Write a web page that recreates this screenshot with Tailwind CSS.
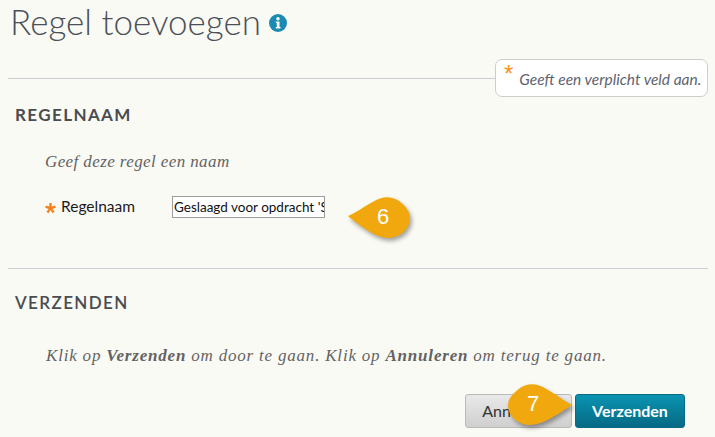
<!DOCTYPE html>
<html lang="en">
<head>
<meta charset="UTF-8">
<title>Regel toevoegen</title>
<script src="https://cdn.jsdelivr.net/npm/@tailwindcss/browser@4"></script>
</head>
<body class="bg-[#fafaf5] w-[715px] h-[437px] overflow-hidden relative font-['Lato',sans-serif]">
  <!-- Title -->
  <div class="flex items-start h-[59px] pl-[10px]">
    <h1 class="text-[35px] leading-[42px] font-light text-[#4a5058]">Regel toevoegen</h1>
    <svg class="ml-[8px] mt-[14px]" width="18" height="18" viewBox="0 0 18 18">
      <circle cx="9" cy="9" r="9" fill="#1c8bb3"/>
      <circle cx="9" cy="4.8" r="1.7" fill="#fff"/>
      <path d="M6.8 7.4h3.7v5.6h1v1.6H6.8V13h1v-4H6.8z" fill="#fff"/>
    </svg>
  </div>

  <!-- Required legend -->
  <div class="flex items-center pl-[8px] pr-[7px] h-[38px]">
    <div class="flex-1 h-px bg-[#c8ced4]"></div>
    <div class="w-[213px] h-[38px] bg-white border border-[#cdcdcd] rounded-[7px] flex pl-[8px]">
      <span class="text-[#f7931e] text-[24px] leading-[26px] mt-[1px] font-['Liberation_Sans',sans-serif]">*</span>
      <span class="italic text-[15.5px] leading-[18px] text-[#5f6470] ml-[6px] mt-[10px] whitespace-nowrap">Geeft een verplicht veld aan.</span>
    </div>
  </div>

  <!-- Regelnaam -->
  <section class="pl-[15px] pt-[8px]">
    <h2 class="text-[17px] leading-[20px] font-bold tracking-[1.4px] text-[#494c50]">REGELNAAM</h2>
    <p class="mt-[27px] ml-[30px] italic text-[17px] tracking-[0.4px] leading-[20px] text-[#636363] font-['Liberation_Serif',serif]">Geef deze regel een naam</p>
    <div class="flex items-center mt-[22px] ml-[30px]">
      <svg width="11" height="11" viewBox="0 0 11 11" class="mt-[5px]"><path d="M4.3 0h2.4v3.6l3.4-1.1.8 2.3-3.4 1.1 2.1 2.9-1.9 1.4-2.2-2.9-2.1 2.9-1.9-1.4 2.1-2.9L.2 4.8 1 2.5l3.3 1.1z" fill="#f5821f"/></svg>
      <label class="ml-[5px] text-[15.5px] leading-[20px] text-[#1a1a1a] w-[111px] -mt-[1px]">Regelnaam</label>
      <input class="w-[153px] h-[22px] bg-white border border-[#9e9e9e] pl-[1px] pr-0 text-[13.5px] text-[#111] font-['Lato',sans-serif] mt-[2px] outline-none" value="Geslaagd voor opdracht 'Schrijven'">
    </div>
  </section>

  <div class="ml-[8px] mr-[7px] mt-[50px] h-px bg-[#c8ced4]"></div>

  <!-- Verzenden -->
  <section class="pl-[15px] pt-[24px]">
    <h2 class="text-[17px] leading-[20px] font-semibold tracking-[1.4px] text-[#494c50]">VERZENDEN</h2>
    <p class="mt-[33px] ml-[31px] italic text-[17px] tracking-[0.8px] leading-[20px] text-[#636363] font-['Liberation_Serif',serif]">Klik op <b>Verzenden</b> om door te gaan. Klik op <b>Annuleren</b> om terug te gaan.</p>
    <div class="flex justify-end gap-[3px] pr-[30px] mt-[28px]">
      <button class="w-[107px] h-[34px] rounded-[3px] border border-[#b9b9b9] bg-gradient-to-b from-[#e9e9e9] to-[#cfcfcf] text-[16px] text-[#333]">Annuleren</button>
      <button class="w-[110px] h-[34px] rounded-[3px] border border-[#0c6a85] bg-gradient-to-b from-[#0a94b2] to-[#066a85] text-[16px] font-bold text-white">Verzenden</button>
    </div>
  </section>

  <!-- Callout 6 -->
  <div class="absolute left-[346px] top-[196px] w-[66px] h-[44px]">
    <svg class="absolute inset-0 drop-shadow-[2px_3px_2px_rgba(0,0,0,0.35)]" width="66" height="44" viewBox="0 0 66 44">
      <path d="M2 20C12 16 24 6 34 2.500C40 .5 47 1 53 5C60 10 64 16 64 22C64 33 54 42 42 42C30 42 14 30 2 20Z" fill="#f0a80e"/>
    </svg>
    <span class="absolute left-[31px] top-[8px] text-[22px] leading-[26px] text-white font-['Liberation_Sans',sans-serif]">6</span>
  </div>

  <!-- Callout 7 -->
  <div class="absolute left-[507px] top-[383px] w-[66px] h-[44px]">
    <svg class="absolute inset-0 drop-shadow-[2px_3px_2px_rgba(0,0,0,0.35)]" width="66" height="44" viewBox="0 0 66 44">
      <path d="M65 22C54 16 42 6 32 2.500C26 .5 19 1 13 5C6 10 1 16 1 22C1 33 11 42 23 42C36 42 53 30 65 22Z" fill="#f0a80e"/>
    </svg>
    <span class="absolute left-[20px] top-[8px] text-[22px] leading-[26px] text-white font-['Liberation_Sans',sans-serif]">7</span>
  </div>
</body>
</html>
